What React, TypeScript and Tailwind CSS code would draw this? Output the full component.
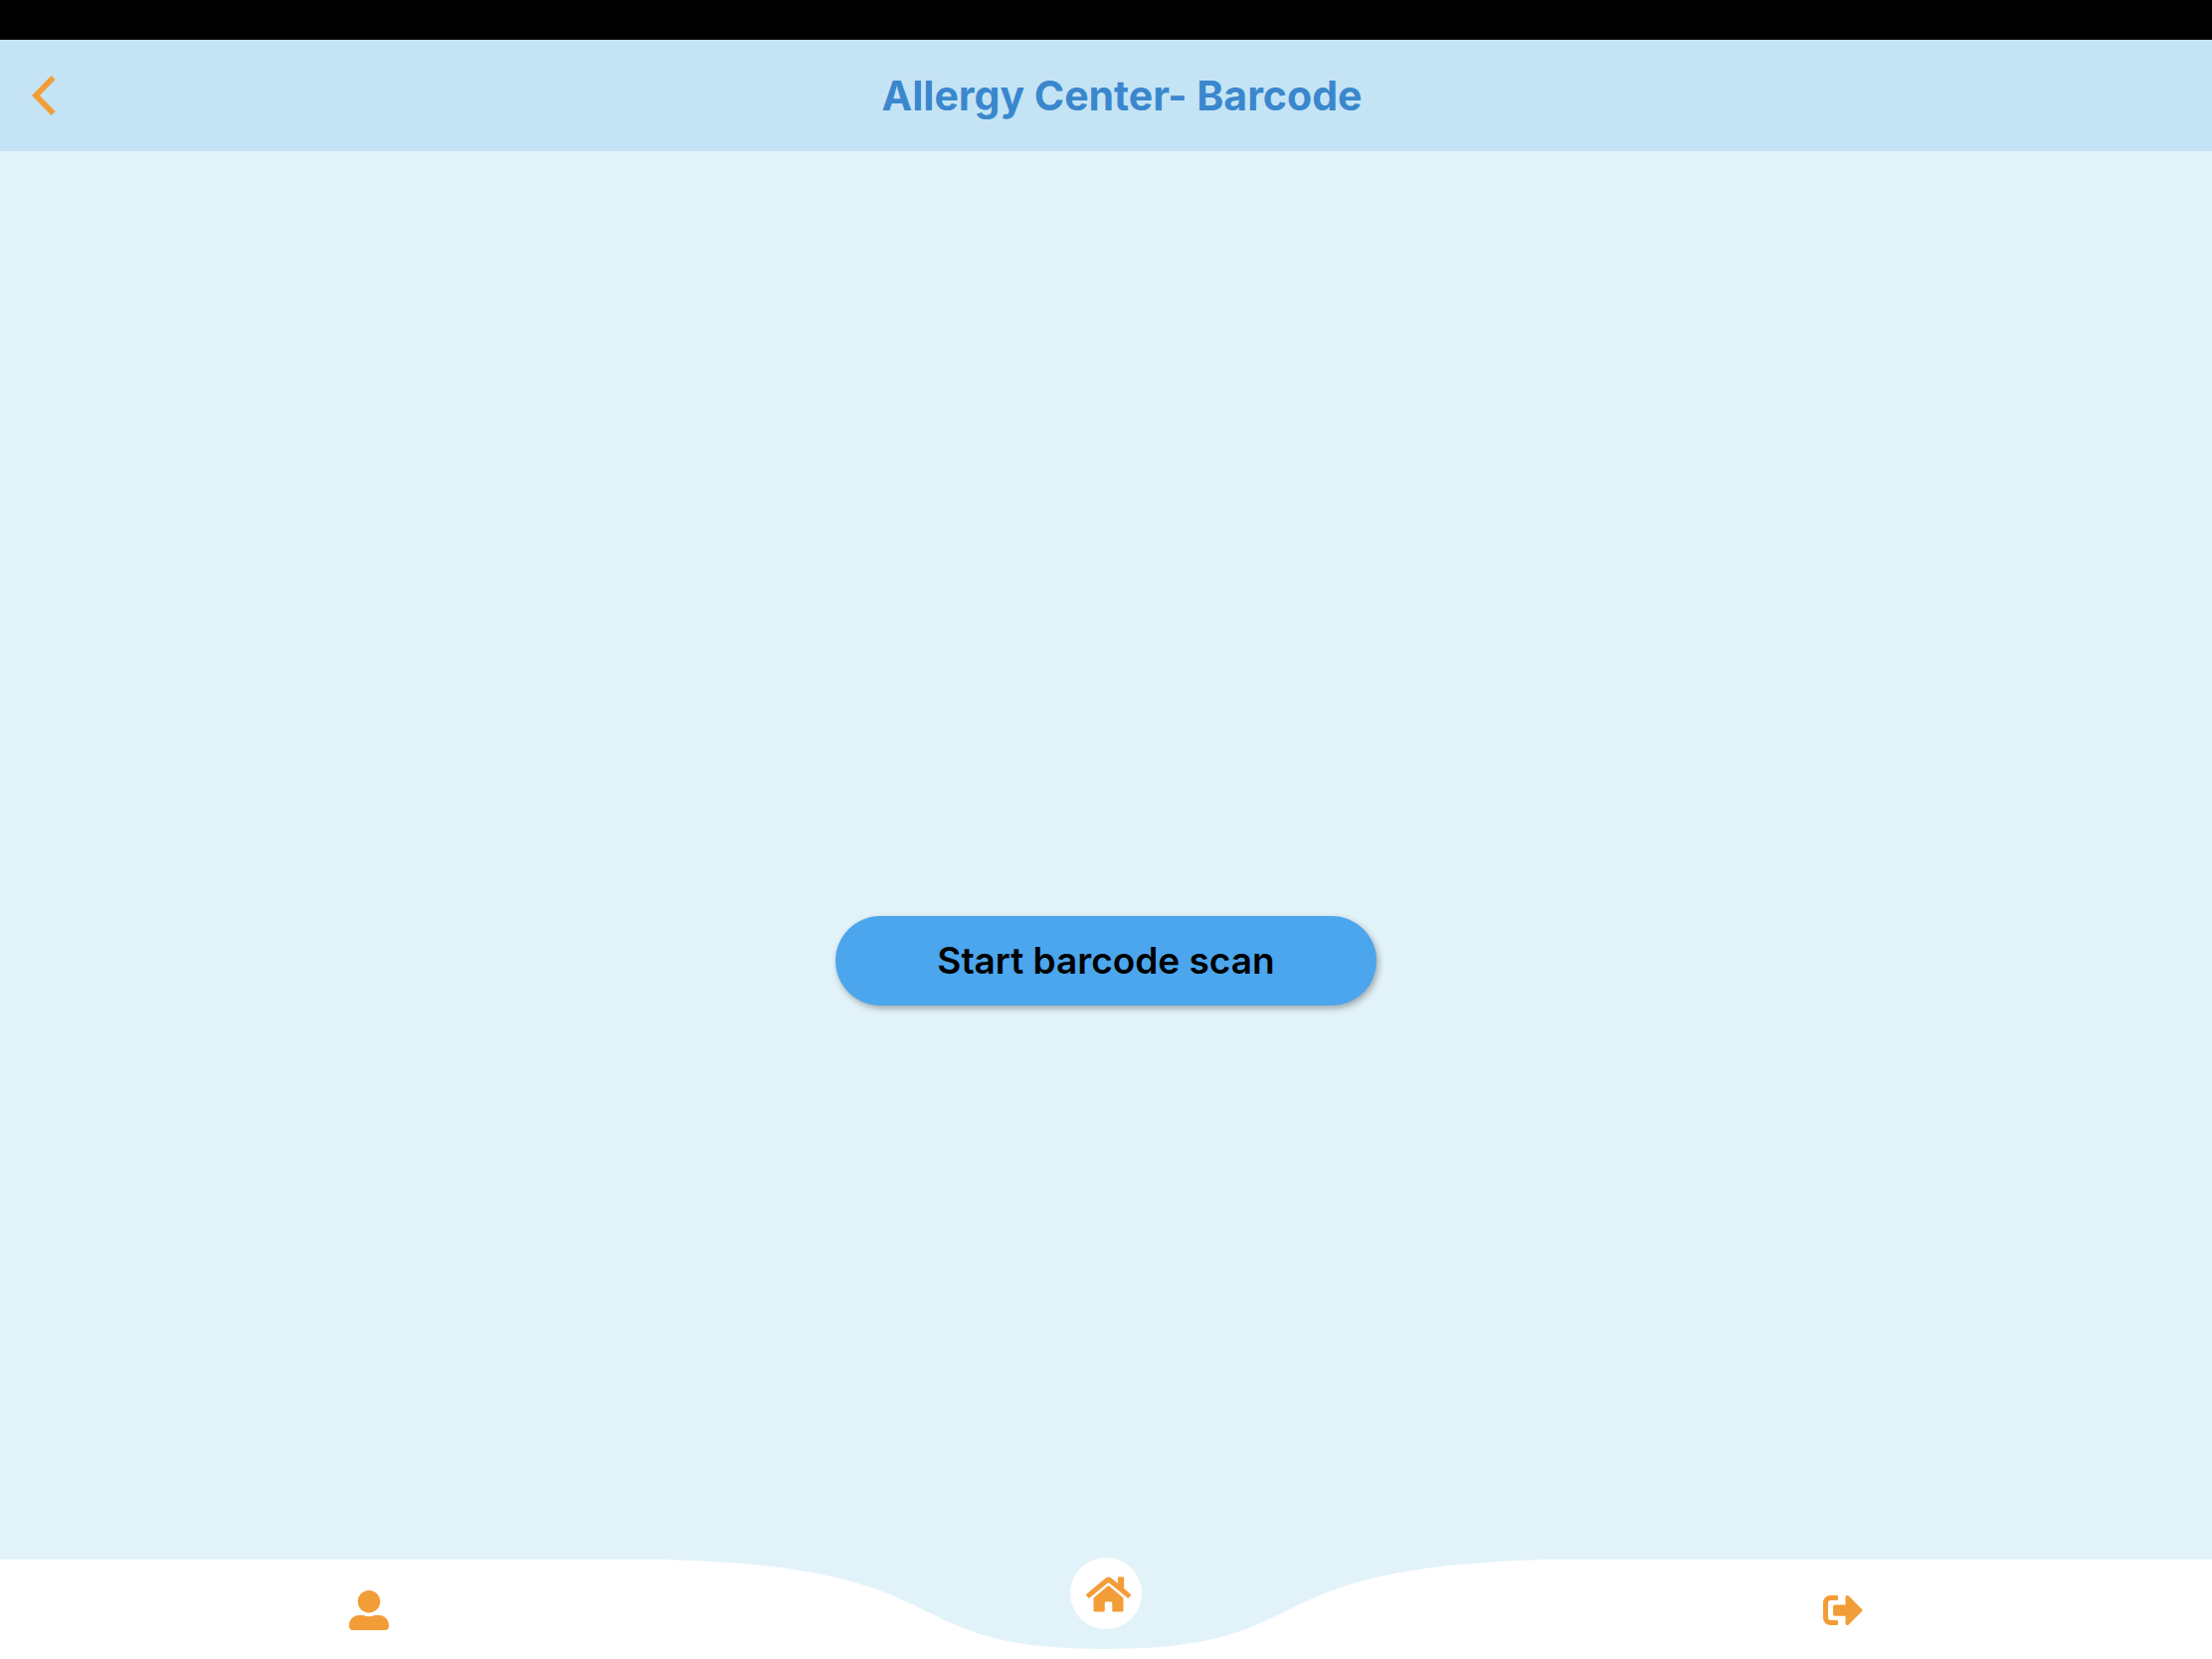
import React from "react";
import { FaHome, FaSignOutAlt, FaUserAlt } from "react-icons/fa";

function Header() {
  return (
    <header className="flex h-28 items-center bg-[#c4e4f5]">
      <button type="button" aria-label="Back" className="flex h-28 w-28 items-center pl-8 text-[#f39d38]">
        <svg viewBox="0 0 24 24" className="h-12 w-12" fill="currentColor" aria-hidden="true">
          <path d="M11.8 4 9.8 2 0 12l9.8 10 2-2L4 12z" />
        </svg>
      </button>
      <h1 className="flex-1 text-center text-[41px] leading-12 font-bold text-[#3a87cd]">
        Allergy Center- Barcode
      </h1>
      <div className="w-20" />
    </header>
  );
}

function BottomNav() {
  return (
    <nav className="relative h-[100px]">
      <svg
        viewBox="0 0 100 100"
        preserveAspectRatio="none"
        className="absolute inset-0 h-full w-full text-white"
        fill="currentColor"
        aria-hidden="true"
      >
        <path d="M0 0H30C44 7.5 40 90 50 90C60 90 56 7.5 70 0H100V100H0Z" />
      </svg>
      <div className="relative grid h-full grid-cols-3 justify-items-center text-[#f39d38]">
        <button type="button" aria-label="Profile" className="flex h-full w-24 items-center justify-center pt-0.5">
          <FaUserAlt className="h-10 w-10" />
        </button>
        <button
          type="button"
          aria-label="Home"
          className="-mt-0.5 flex h-18 w-18 items-center rounded-full bg-white pt-0.5 pl-4"
        >
          <FaHome className="h-10 w-[45px] shrink-0" />
        </button>
        <button type="button" aria-label="Sign out" className="flex h-full w-24 items-center justify-center pt-0.5">
          <FaSignOutAlt className="h-10 w-10" />
        </button>
      </div>
    </nav>
  );
}

export default function App() {
  return (
    <div className="flex min-h-screen flex-col bg-[#e2f2f9] font-['Inter',sans-serif]">
      <div className="h-10 bg-black" />
      <Header />
      <main className="flex flex-1 flex-col items-center justify-center pt-[212px]">
        <button
          type="button"
          className="flex h-[90px] w-[544px] items-center justify-center rounded-full bg-[#4ca6ee] text-[37px] leading-11 font-semibold text-black shadow-[2px_3px_6px_rgba(0,0,0,0.3)]"
        >
          Start barcode scan
        </button>
      </main>
      <BottomNav />
    </div>
  );
}
